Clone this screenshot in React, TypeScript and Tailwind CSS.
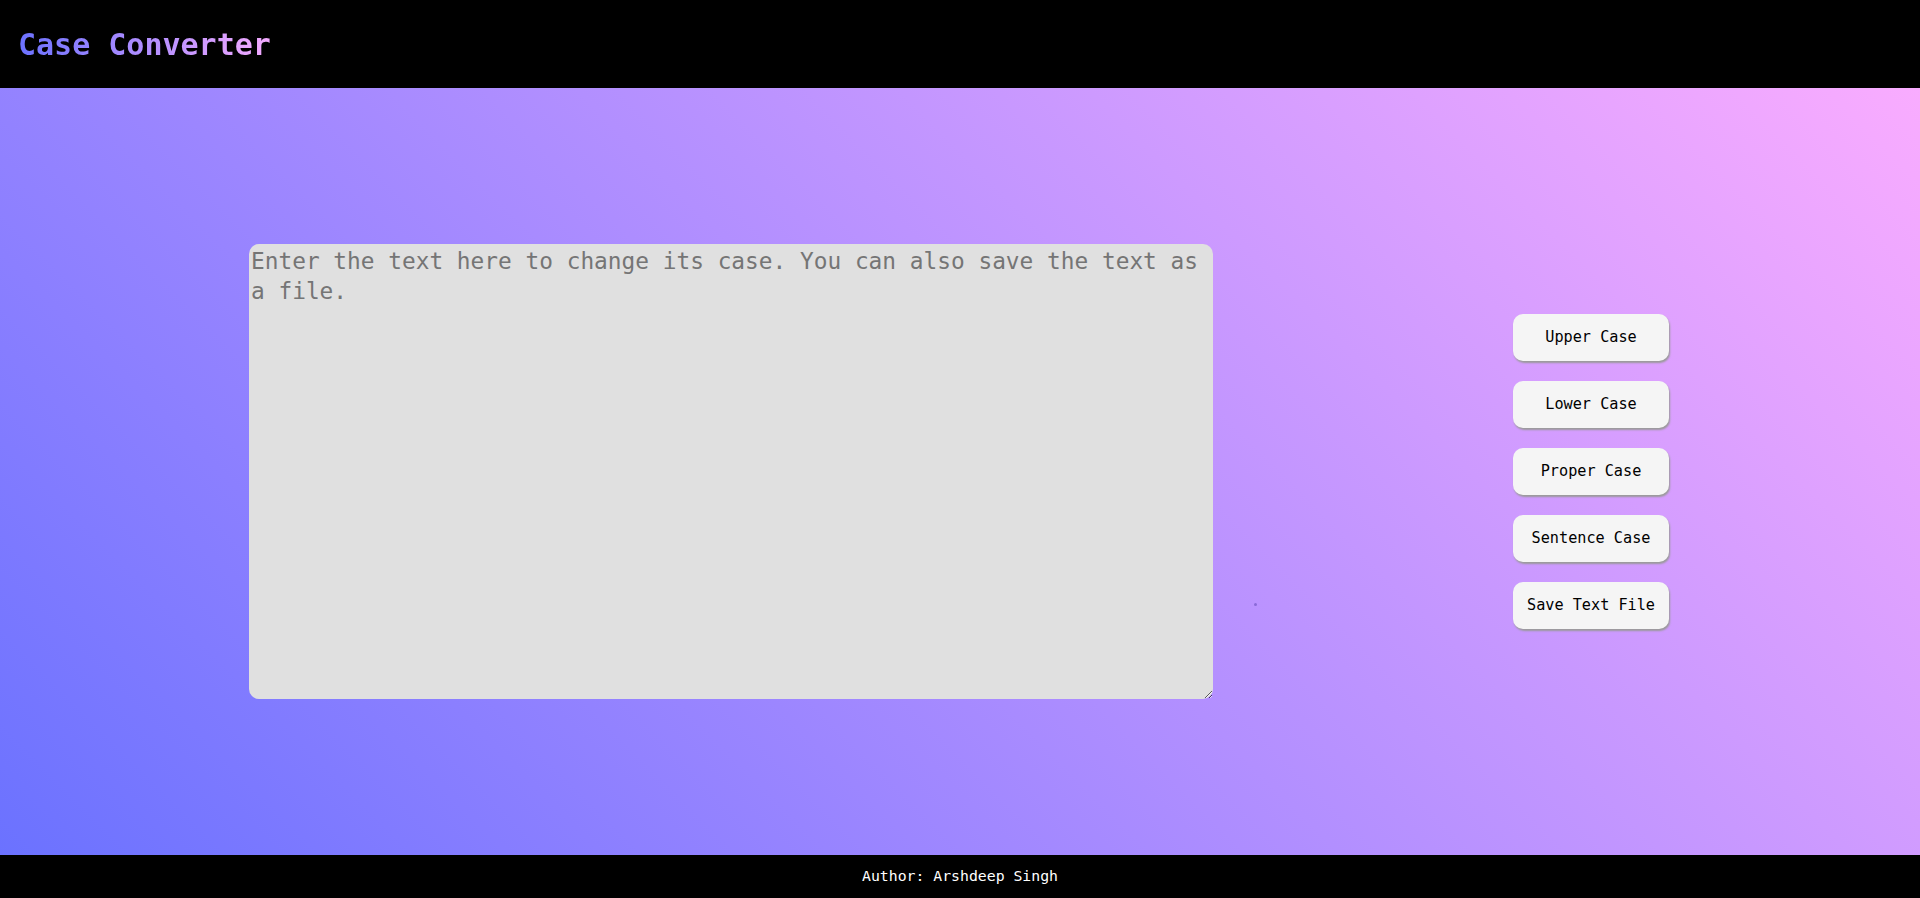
import React from "react";

const mono = { fontFamily: '"DejaVu Sans Mono", "Liberation Mono", monospace' };

export default function App() {
  const buttons = ["Upper Case", "Lower Case", "Proper Case", "Sentence Case", "Save Text File"];
  return (
    <div className="flex h-[898px] w-full flex-col overflow-hidden" style={mono}>
      <header className="flex h-[88px] shrink-0 items-center bg-black pl-[18px]">
        <h1 className="bg-[linear-gradient(90deg,#6c72ff,#f4aaff)] bg-clip-text text-[30px] font-bold text-transparent">
          Case Converter
        </h1>
      </header>
      <main className="relative flex flex-1 items-center bg-[linear-gradient(45deg,#6b72ff,#f9acff)]">
        <textarea
          className="ml-[249px] h-[455px] w-[964px] rounded-[10px] border-0 bg-[#e0e0e0] p-[2px] text-[22.8px] leading-[30px] text-black outline-none placeholder:text-[#757575]"
          style={mono}
          placeholder="Enter the text here to change its case. You can also save the text as a file."
        />
        <div className="ml-[300px] flex w-[156px] flex-col gap-5">
          {buttons.map((b) => (
            <button
              key={b}
              className="h-[47px] w-[156px] rounded-[10px] bg-[#f5f5f5] text-[15.2px] text-black shadow-[1px_2px_2px_#9a9a9a]"
              style={mono}
            >
              {b}
            </button>
          ))}
        </div>
        <div className="absolute left-[1254px] top-[515px] h-[3px] w-[3px] rounded-full bg-[#8a6ad8]" />
      </main>
      <footer className="flex h-[43px] shrink-0 items-center justify-center bg-black text-[14.8px] text-white">
        Author: Arshdeep Singh
      </footer>
    </div>
  );
}
